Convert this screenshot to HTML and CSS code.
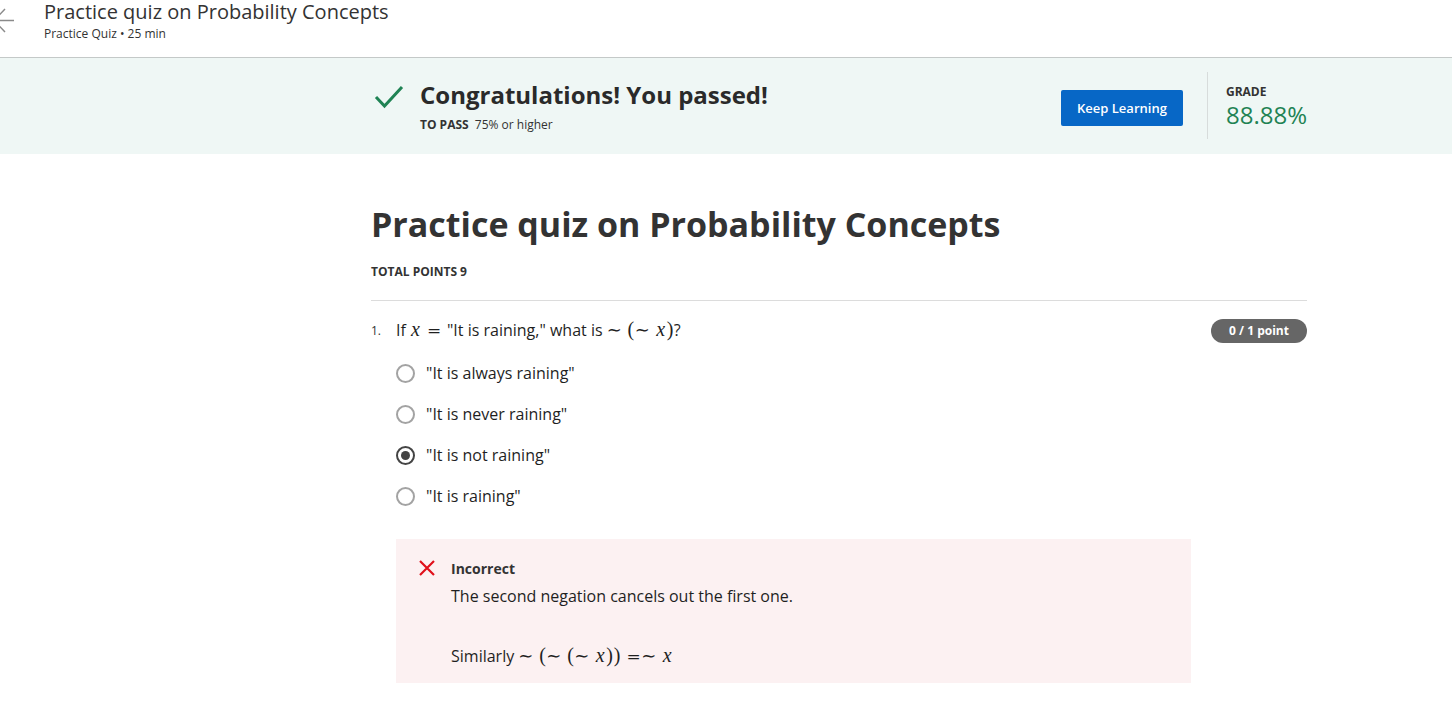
FILE: index.html
```html
<!DOCTYPE html>
<html lang="en">
<head>
<meta charset="utf-8">
<title>Practice quiz on Probability Concepts</title>
<link rel="stylesheet" href="styles.css">
</head>
<body>
<header class="topbar">
  <svg class="back" width="24" height="40" viewBox="0 0 24 40" aria-hidden="true">
    <path d="M22 20.5H2M13 9L2 20.5L13 32" fill="none" stroke="#8a8a8a" stroke-width="1.5"/>
  </svg>
  <div class="topbar-text">
    <div class="topbar-title">Practice quiz on Probability Concepts</div>
    <div class="topbar-sub">Practice Quiz • 25 min</div>
  </div>
</header>

<section class="banner">
  <div class="banner-inner">
    <div class="pass">
      <svg class="check" width="30" height="26" viewBox="0 0 30 26" aria-hidden="true">
        <path d="M2 13L10.5 22L28 3" fill="none" stroke="#1f8354" stroke-width="3"/>
      </svg>
      <div class="pass-text">
        <div class="pass-title">Congratulations! You passed!</div>
        <div class="pass-sub"><b>TO PASS</b> 75% or higher</div>
      </div>
    </div>
    <div class="banner-right">
      <button class="btn">Keep Learning</button>
      <div class="divider"></div>
      <div class="grade">
        <div class="grade-label">GRADE</div>
        <div class="grade-value">88.88%</div>
      </div>
    </div>
  </div>
</section>

<main class="content">
  <h1 class="quiz-title">Practice quiz on Probability Concepts</h1>
  <div class="total">TOTAL POINTS 9</div>
  <hr class="rule">

  <div class="question">
    <div class="q-head">
      <span class="q-num">1.</span>
      <span class="q-text">If <span class="m-x sp">x</span><span class="m-eq sp">=</span>"It is raining," what is <span class="m-t sp">∼</span><span class="m-p">(</span><span class="m-t sp">∼</span><span class="m-x">x</span><span class="m-p">)</span>?</span>
      <span class="badge">0 / 1 point</span>
    </div>

    <div class="options">
      <label class="option"><span class="radio"></span>"It is always raining"</label>
      <label class="option"><span class="radio"></span>"It is never raining"</label>
      <label class="option"><span class="radio checked"></span>"It is not raining"</label>
      <label class="option"><span class="radio"></span>"It is raining"</label>
    </div>

    <div class="feedback">
      <svg class="xicon" width="18" height="18" viewBox="0 0 18 18" aria-hidden="true">
        <path d="M2 2L16 16M16 2L2 16" stroke="#e0101b" stroke-width="2.2"/>
      </svg>
      <div class="fb-body">
        <div class="fb-title">Incorrect</div>
        <div class="fb-text">The second negation cancels out the first one.</div>
        <div class="fb-text fb-gap">Similarly <span class="m-t sp">∼</span><span class="m-p">(</span><span class="m-t sp">∼</span><span class="m-p">(</span><span class="m-t sp">∼</span><span class="m-x">x</span><span class="m-p">)</span><span class="m-p sp">)</span><span class="m-eq">=</span><span class="m-t sp">∼</span><span class="m-x">x</span></div>
      </div>
    </div>
  </div>
</main>
</body>
</html>
```

FILE: styles.css
```css
* { box-sizing: border-box; }
html, body { margin: 0; padding: 0; }
body {
  font-family: "Open Sans", "Liberation Sans", sans-serif;
  color: #1f1f1f;
  background: #fff;
  width: 1452px;
  overflow: hidden;
}

.topbar {
  height: 58px;
  border-bottom: 1px solid #c4c9c8;
  display: flex;
  align-items: flex-start;
}
.back { margin-left: -8px; margin-top: 0; flex: none; }
.topbar-text { margin-left: 28px; }
.topbar-title { font-size: 20px; line-height: 24px; color: #333; }
.topbar-sub { font-size: 12px; line-height: 16px; color: #333; margin-top: 2px; }

.banner { background: #eff7f5; height: 96px; }
.banner-inner {
  margin-left: 371px;
  width: 936px;
  height: 96px;
  display: flex;
  align-items: center;
  justify-content: space-between;
}
.pass { display: flex; align-items: flex-start; align-self: flex-start; margin-top: 22px; }
.check { margin-left: 3px; margin-top: 4px; flex: none; }
.pass-text { margin-left: 16px; }
.pass-title { font-size: 24px; line-height: 30px; font-weight: 700; color: #2a2a2a; }
.pass-sub { font-size: 12px; line-height: 18px; margin-top: 6px; color: #333; }
.pass-sub b { font-weight: 700; margin-right: 3px; }

.banner-right { display: flex; align-items: center; }
.btn {
  font-family: inherit;
  font-size: 13px;
  font-weight: 600;
  color: #fff;
  background: #0767c6;
  border: none;
  border-radius: 2px;
  width: 122px;
  height: 36px;
  padding: 0;
  margin-top: 4px;
}
.divider { width: 1px; height: 67px; background: #d7dcdb; margin-left: 24px; margin-top: -2px; }
.grade { margin-left: 18px; margin-top: 2px; }
.grade-label { font-size: 12px; line-height: 16px; font-weight: 700; color: #333; }
.grade-value { font-size: 24px; line-height: 30px; color: #1f8354; }

.content { margin-left: 371px; width: 936px; }
.quiz-title {
  margin: 47px 0 0;
  font-size: 34px;
  line-height: 46px;
  font-weight: 700;
  color: #333;
}
.total { margin-top: 17px; font-size: 12px; line-height: 16px; font-weight: 700; color: #333; }
.rule { border: none; border-top: 1px solid #dcdcdc; margin: 20px 0 0; }

.question { padding-top: 17px; }
.q-head { display: flex; align-items: center; height: 24px; }
.q-num { font-size: 12px; width: 25px; color: #333; }
.q-text { font-size: 16px; line-height: 24px; flex: 1; color: #1f1f1f; white-space: nowrap; }
.badge {
  background: #666;
  color: #fff;
  font-size: 12px;
  font-weight: 700;
  border-radius: 12px;
  width: 96px;
  height: 24px;
  line-height: 24px;
  text-align: center;
  margin-top: 2px;
}

/* math glyphs, laid out with KaTeX-like advances (19.36px math size) */
.m-x, .m-eq, .m-t, .m-p {
  display: inline-block;
  text-align: center;
  line-height: 1;
  vertical-align: baseline;
  white-space: nowrap;
}
.m-x { width: 11.1px; font-family: "Liberation Serif", "DejaVu Serif", serif; font-style: italic; font-size: 20px; }
.m-eq { width: 15.06px; font-family: "DejaVu Serif", "Liberation Serif", serif; font-size: 17px; }
.m-t { width: 15.06px; font-family: "DejaVu Sans", "DejaVu Serif", serif; font-size: 18px; }
.m-p { width: 7.53px; font-family: "Liberation Serif", "DejaVu Serif", serif; font-size: 20px; }
.sp { margin-right: 5.4px; }

.options { margin-top: 19px; margin-left: 25px; display: flex; flex-direction: column; gap: 17px; }
.option { display: flex; align-items: center; font-size: 16px; line-height: 24px; height: 24px; color: #1f1f1f; }
.radio {
  width: 19px; height: 19px;
  border: 2px solid #a3a3a3;
  border-radius: 50%;
  margin-right: 11px;
  flex: none;
  position: relative;
}
.radio.checked { border-color: #444; }
.radio.checked::after {
  content: "";
  position: absolute;
  left: 3px; top: 3px;
  width: 9px; height: 9px;
  border-radius: 50%;
  background: #444;
}

.feedback {
  margin-top: 31px;
  margin-left: 25px;
  width: 795px;
  height: 144px;
  background: #fcf1f2;
  display: flex;
  padding: 20px 0 0 22px;
}
.xicon { flex: none; margin-top: 0; }
.fb-body { margin-left: 15px; }
.fb-title { font-size: 14px; line-height: 20px; font-weight: 700; color: #333; }
.fb-text { font-size: 16px; line-height: 24px; margin-top: 5px; color: #1f1f1f; white-space: nowrap; }
.fb-gap { margin-top: 36px; }
```
